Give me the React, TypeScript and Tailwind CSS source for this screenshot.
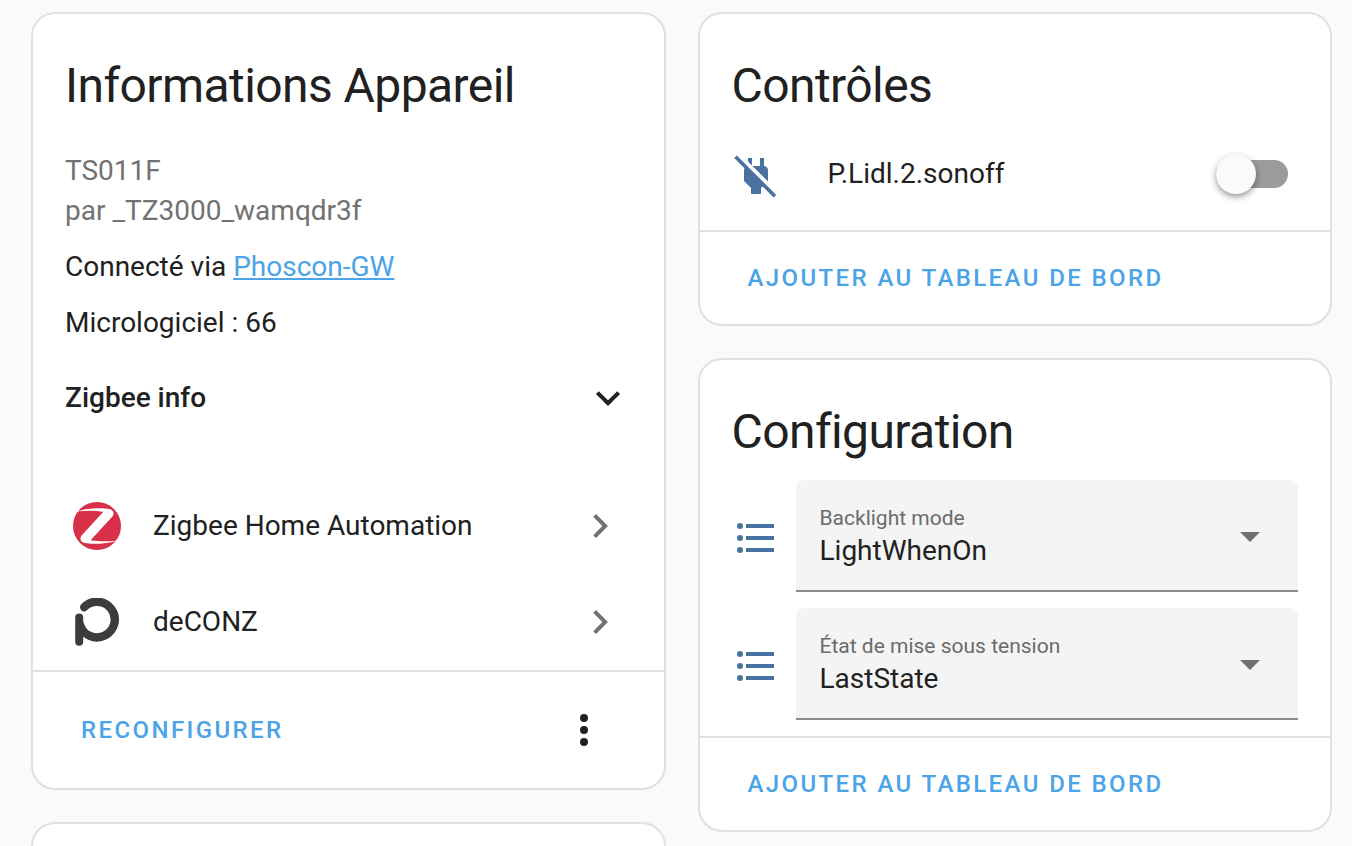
import { useState } from "react";
import clsx from "clsx";

// Material Design icon outlines, 24x24 grid
const ICONS = {
  chevronDown: "M7.41,8.58L12,13.17L16.59,8.58L18,10L12,16L6,10L7.41,8.58Z",
  chevronRight: "M8.59,16.58L13.17,12L8.59,7.41L10,6L16,12L10,18L8.59,16.58Z",
  dots: "M12,16A2,2 0 0,1 14,18A2,2 0 0,1 12,20A2,2 0 0,1 10,18A2,2 0 0,1 12,16M12,10A2,2 0 0,1 14,12A2,2 0 0,1 12,14A2,2 0 0,1 10,12A2,2 0 0,1 12,10M12,4A2,2 0 0,1 14,6A2,2 0 0,1 12,8A2,2 0 0,1 10,6A2,2 0 0,1 12,4Z",
  list: "M7,5H21V7H7V5M7,13V11H21V13H7M4,4.5A1.5,1.5 0 0,1 5.5,6A1.5,1.5 0 0,1 4,7.5A1.5,1.5 0 0,1 2.5,6A1.5,1.5 0 0,1 4,4.5M4,10.5A1.5,1.5 0 0,1 5.5,12A1.5,1.5 0 0,1 4,13.5A1.5,1.5 0 0,1 2.5,12A1.5,1.5 0 0,1 4,10.5M7,19V17H21V19H7M4,16.5A1.5,1.5 0 0,1 5.5,18A1.5,1.5 0 0,1 4,19.5A1.5,1.5 0 0,1 2.5,18A1.5,1.5 0 0,1 4,16.5Z",
  menuDown: "M7,10L12,15L17,10H7Z",
  plugOff:
    "M22.11 21.46L2.39 1.73L1.11 3L6.25 8.14C6.1 8.41 6 8.7 6 9V14.5L9.5 18V21H14.5V18L15.31 17.2L20.84 22.73L22.11 21.46M18 14.5V9C18 8 17 7 16 7V3H14V7H10.2L17.85 14.65L18 14.5M10 3H8V4.8L10 6.8V3Z",
};

function Icon({ path, className }: { path: string; className?: string }) {
  return (
    <svg viewBox="0 0 24 24" fill="currentColor" aria-hidden="true" className={clsx("size-12 shrink-0", className)}>
      <path d={path} />
    </svg>
  );
}

function ZigbeeLogo() {
  return (
    <svg viewBox="0 0 48 48" aria-hidden="true" className="size-12 shrink-0">
      <circle cx="24" cy="24" r="24" fill="#d9304a" />
      <path
        d="M3.6 9.6C12 6.4 28 5.4 36.5 7C40.8 8 41.6 12 39.4 14.6L17.6 38.2C26 39.8 36 39.6 44.4 38.4C36 41.6 20 42.6 11.5 41C7.2 40 6.4 36 8.6 33.4L30.4 9.8C22 8.2 12 8.4 3.6 9.6Z"
        fill="#fff"
      />
    </svg>
  );
}

function DeconzLogo() {
  return (
    <svg
      viewBox="0 0 48 48"
      fill="none"
      stroke="#3c3c3c"
      strokeLinecap="round"
      aria-hidden="true"
      className="size-12 shrink-0"
    >
      <path d="M11.2 9.2A17.8 17.8 0 1 1 6.9 26.6" strokeWidth="8.4" />
      <path d="M6.2 19.4V43.8" strokeWidth="8" />
    </svg>
  );
}

function Card({ title, children }: { title: string; children: React.ReactNode }) {
  return (
    <section className="bg-white border-2 border-[#e0e0e0] rounded-3xl">
      <h1 className="px-8 pt-6 text-5xl leading-24 tracking-[-0.012em]">{title}</h1>
      {children}
    </section>
  );
}

function TextButton({ label }: { label: string }) {
  return (
    <button type="button" className="px-4 h-15 text-2xl font-medium uppercase tracking-widest text-[#4ba3e8]">
      {label}
    </button>
  );
}

function IntegrationRow({ logo, name }: { logo: React.ReactNode; name: string }) {
  return (
    <a href="#" className="h-24 px-10 flex items-center gap-8">
      {logo}
      <span className="flex-1">{name}</span>
      <Icon path={ICONS.chevronRight} className="text-[#727272]" />
    </a>
  );
}

function SelectRow({ id, label, options }: { id: string; label: string; options: string[] }) {
  return (
    <div className="flex items-center gap-4">
      <Icon path={ICONS.list} className="mt-1 text-[#4a72a0]" />
      <div className="relative flex-1">
        <label htmlFor={id} className="absolute left-6 top-6 text-[21px] leading-7 text-[#6b6b6b] pointer-events-none">
          {label}
        </label>
        <select
          id={id}
          className="block w-full h-28 pt-8 px-6 appearance-none bg-[#f4f4f4] rounded-t-lg border-b-2 border-[#8c8c8c] outline-none"
        >
          {options.map((o) => (
            <option key={o}>{o}</option>
          ))}
        </select>
        <Icon path={ICONS.menuDown} className="absolute right-6 top-8 text-[#707070] pointer-events-none" />
      </div>
    </div>
  );
}

function Switch({ id }: { id: string }) {
  const [on, setOn] = useState(false);

  return (
    <span className="relative flex items-center w-18 h-10 mr-2.5">
      <input
        id={id}
        type="checkbox"
        role="switch"
        checked={on}
        onChange={(e) => setOn(e.target.checked)}
        className={clsx("appearance-none w-full h-7 rounded-full", on ? "bg-[#8cc8f2]" : "bg-[#9b9b9b]")}
      />
      <span
        className={clsx(
          "absolute top-0 size-10 rounded-full shadow-[0_3px_6px_rgba(0,0,0,0.4)] pointer-events-none",
          on ? "right-0 bg-[#4ba3e8]" : "left-0 bg-[#fafafa]",
        )}
      />
    </span>
  );
}

export default function App() {
  return (
    <main className="min-h-screen grid grid-cols-2 gap-8 pl-[31px] pr-5 pt-3 bg-[#fafafa] text-[#212121] text-[28px] leading-10 font-[Roboto,sans-serif]">
      <div className="flex flex-col gap-8">
        <Card title="Informations Appareil">
          <div className="px-8 pt-[17px] flex flex-col gap-4">
            <div className="text-[#727272]">
              <p>TS011F</p>
              <p>par _TZ3000_wamqdr3f</p>
            </div>
            <p>
              Connecté via{" "}
              <a href="#" className="text-[#4ba3e8] underline">
                Phoscon-GW
              </a>
            </p>
            <p>Micrologiciel : 66</p>
          </div>
          <button type="button" className="w-full mt-[31px] px-8 flex items-center justify-between font-medium">
            Zigbee info
            <Icon path={ICONS.chevronDown} />
          </button>
          <div className="pt-14">
            <IntegrationRow logo={<ZigbeeLogo />} name="Zigbee Home Automation" />
            <IntegrationRow logo={<DeconzLogo />} name="deCONZ" />
          </div>
          <footer className="border-t-2 border-[#e0e0e0] py-7 pl-8 pr-14 flex items-center justify-between">
            <TextButton label="Reconfigurer" />
            <button type="button" aria-label="Menu">
              <Icon path={ICONS.dots} />
            </button>
          </footer>
        </Card>
        <section className="flex-1 bg-white border-2 border-b-0 border-[#e0e0e0] rounded-t-3xl" />
      </div>

      <div className="flex flex-col gap-8">
        <Card title="Contrôles">
          <div className="h-20 mb-4 px-8 flex items-center">
            <Icon path={ICONS.plugOff} className="mt-1 text-[#4a72a0]" />
            <label htmlFor="plug" className="flex-1 pl-12">
              P.Lidl.2.sonoff
            </label>
            <Switch id="plug" />
          </div>
          <footer className="border-t-2 border-[#e0e0e0] py-4 px-8">
            <TextButton label="Ajouter au tableau de bord" />
          </footer>
        </Card>

        <Card title="Configuration">
          <div className="px-8 pb-4 flex flex-col gap-4">
            <SelectRow id="backlight" label="Backlight mode" options={["LightWhenOn", "LightWhenOff"]} />
            <SelectRow id="power-on" label="État de mise sous tension" options={["LastState", "On", "Off"]} />
          </div>
          <footer className="border-t-2 border-[#e0e0e0] py-4 px-8">
            <TextButton label="Ajouter au tableau de bord" />
          </footer>
        </Card>
      </div>
    </main>
  );
}
